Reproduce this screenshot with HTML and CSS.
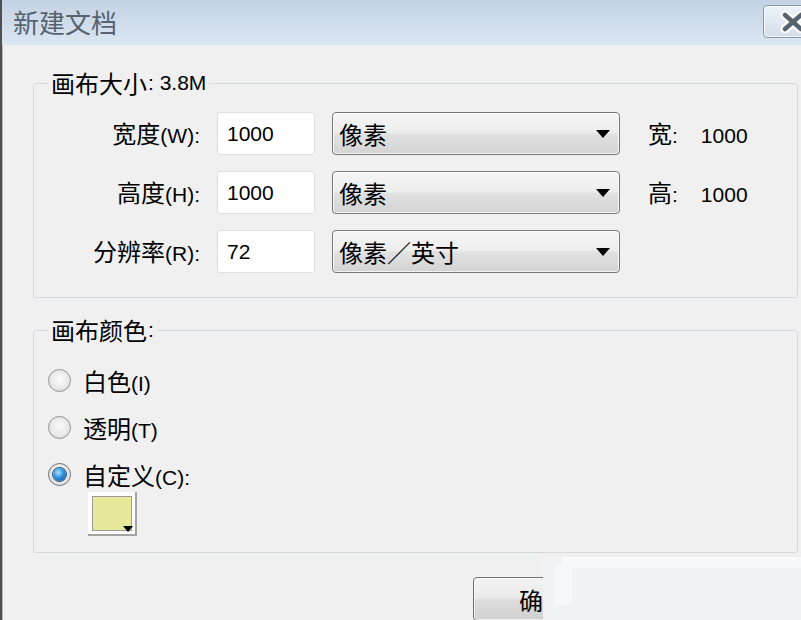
FILE: index.html
```html
<!DOCTYPE html>
<html lang="zh-CN">
<head>
<meta charset="utf-8">
<title>新建文档</title>
<link rel="stylesheet" href="styles.css">
</head>
<body>
<div class="window">
  <div class="titlebar">
    <span class="title">新建文档</span>
    <div class="close" role="button" aria-label="关闭">
      <svg class="close-x" width="26" height="22" viewBox="0 0 26 22">
        <path d="M5 4 L21 18 M21 4 L5 18" fill="none" stroke="#ffffff" stroke-width="9" stroke-linecap="round"/>
        <path d="M5 4 L21 18 M21 4 L5 18" fill="none" stroke="#56626e" stroke-width="4.5" stroke-linecap="round"/>
      </svg>
    </div>
  </div>

  <fieldset class="group size">
    <legend>画布大小<span class="en">: 3.8M</span></legend>
    <div class="grid">
      <div class="lbl">宽度<span class="en">(W):</span></div>
      <div class="input en">1000</div>
      <div class="select"><span>像素</span><i class="arrow"></i></div>
      <div class="info">宽<span class="en">:</span><span class="en val">1000</span></div>

      <div class="lbl">高度<span class="en">(H):</span></div>
      <div class="input en">1000</div>
      <div class="select"><span>像素</span><i class="arrow"></i></div>
      <div class="info">高<span class="en">:</span><span class="en val">1000</span></div>

      <div class="lbl">分辨率<span class="en">(R):</span></div>
      <div class="input en">72</div>
      <div class="select"><span>像素／英寸</span><i class="arrow"></i></div>
      <div class="info"></div>
    </div>
  </fieldset>

  <fieldset class="group color">
    <legend>画布颜色<span class="en">:</span></legend>
    <div class="options">
      <div class="opt"><span class="radio"></span><span>白色<span class="en">(I)</span></span></div>
      <div class="opt"><span class="radio"></span><span>透明<span class="en">(T)</span></span></div>
      <div class="opt"><span class="radio on"><span class="dot"></span></span><span>自定义<span class="en">(C):</span></span></div>
    </div>
    <div class="swatch"><span class="fill"></span><i class="swatch-arrow"></i></div>
  </fieldset>

  <div class="footer">
    <button class="btn" type="button">确定</button>
  </div>

  <div class="glare">
    <div class="glare-top"></div>
    <div class="glare-block"></div>
  </div>
</div>
</body>
</html>
```

FILE: styles.css
```css
* { box-sizing: border-box; }

html, body {
  margin: 0;
  padding: 0;
}

body {
  width: 801px;
  height: 620px;
  overflow: hidden;
  background: #f0f0f0;
  font-family: "Noto Sans CJK SC", sans-serif;
  font-size: 24px;
  color: #000;
}

.en {
  font-family: "Liberation Sans", "Noto Sans CJK SC", sans-serif;
  font-size: 21px;
}

.window {
  position: relative;
  height: 620px;
  border-left: 2px solid #4f4f4f;
  box-shadow: inset 1px 0 #b8b8b8;
  display: flex;
  flex-direction: column;
  overflow: hidden;
}

/* title bar */
.titlebar {
  flex: none;
  height: 45px;
  display: flex;
  align-items: flex-start;
  padding-left: 11px;
  background: linear-gradient(#c3d2e3, #dbe6f2);
}

.title {
  margin-top: 9px;
  font-size: 26px;
  line-height: 26px;
  color: #56636f;
}

.close {
  flex: none;
  margin-left: auto;
  margin-right: -30px;
  margin-top: 5px;
  width: 68px;
  height: 33px;
  padding: 0 0 0 16px;
  border: 1px solid #8a9bb0;
  border-radius: 4px;
  background: linear-gradient(#eef3f9, #d3deea);
  box-shadow: inset 0 0 0 1px rgba(255,255,255,0.6);
  display: flex;
  align-items: center;
}

.close-x {
  display: block;
  flex: none;
}

/* group boxes */
.group {
  margin: 25px 3px 0 31px;
  padding: 16px 14px 24px 14px;
  border: 1px solid #d3d9de;
  border-radius: 3px;
  min-width: 0;
}

.group legend {
  height: 26px;
  padding: 0 3px;
  display: flex;
  align-items: center;
  line-height: 26px;
  font-size: 24px;
  white-space: pre;
}

.group legend .en { margin-left: 1px; }

.group.color {
  margin-top: 19px;
  padding-top: 22px;
  padding-bottom: 16px;
}

.grid {
  display: grid;
  grid-template-columns: 152px 98px 288px auto;
  grid-auto-rows: 43px;
  column-gap: 17px;
  row-gap: 16px;
  align-items: center;
}

.lbl {
  text-align: right;
  white-space: nowrap;
  margin-top: -3px;
}

.info {
  margin-left: 11px;
  white-space: nowrap;
  margin-top: -3px;
}

.input {
  height: 43px;
  display: flex;
  align-items: center;
  padding-left: 9px;
  background: #fff;
  border: 1px solid #dedfe3;
  border-radius: 3px;
}

.select {
  height: 43px;
  display: flex;
  align-items: center;
  padding: 0 9px 0 6px;
  border: 1px solid #777;
  border-radius: 4px;
  background: linear-gradient(#f5f5f5 0%, #ededed 47%, #e1e1e1 53%, #d3d3d3 100%);
  box-shadow: inset 0 0 0 1px rgba(255,255,255,0.75);
  white-space: nowrap;
}

.arrow {
  margin-left: auto;
  width: 0;
  height: 0;
  border-left: 7px solid transparent;
  border-right: 7px solid transparent;
  border-top: 8px solid #000;
}

.info .val { margin-left: 23px; }

/* radio options */
.options {
  display: flex;
  flex-direction: column;
  gap: 17px;
}

.opt {
  height: 30px;
  display: flex;
  align-items: center;
  gap: 12px;
}

.radio {
  flex: none;
  width: 23px;
  height: 23px;
  border-radius: 50%;
  border: 1px solid #939393;
  background: radial-gradient(circle at 50% 45%, #fbfbfb 0%, #e9e9e9 55%, #cdcdcd 100%);
  display: flex;
  align-items: center;
  justify-content: center;
}

.radio.on {
  border-color: #6f6f6f;
}

.radio .dot {
  width: 13px;
  height: 13px;
  border-radius: 50%;
  background: radial-gradient(circle at 40% 35%, #a8e0ff 0%, #2f92de 45%, #0b4a8c 100%);
  box-shadow: 0 0 0 1px #33587c;
}

/* colour swatch */
.swatch {
  position: relative;
  margin: 3px 0 0 40px;
  width: 49px;
  height: 44px;
  display: flex;
  padding: 4px 3px 3px 4px;
  background: #fff;
  border-right: 2px solid #a3a3a3;
  border-bottom: 2px solid #a3a3a3;
}

.fill {
  flex: 1;
  background: #e8e89b;
  border: 1px solid #9c9c9c;
}

.swatch-arrow {
  position: absolute;
  right: 2px;
  bottom: 2px;
  width: 0;
  height: 0;
  border-left: 5px solid transparent;
  border-right: 5px solid transparent;
  border-top: 6px solid #000;
}

/* footer */
.footer {
  display: flex;
  padding: 24px 0 0 471px;
}

.btn {
  flex: none;
  width: 140px;
  height: 44px;
  padding: 0;
  font: inherit;
  color: #000;
  border: 1px solid #707070;
  border-radius: 4px;
  background: linear-gradient(#f3f3f3 0%, #ebebeb 47%, #dddddd 53%, #cfcfcf 100%);
  box-shadow: inset 0 0 0 1px rgba(255,255,255,0.7);
  display: flex;
  align-items: center;
  justify-content: center;
}

/* light patch laid over the lower right corner */
.glare {
  position: absolute;
  left: 541px;
  top: 557px;
  right: 0;
  bottom: 0;
  background: #f1f2f3;
}

.glare-top {
  position: absolute;
  left: 19px;
  top: 0;
  right: 0;
  height: 11px;
  background: #f8f9fb;
}

.glare-block {
  position: absolute;
  left: 12px;
  top: 8px;
  width: 17px;
  height: 40px;
  background: #f7f8fa;
}
```
